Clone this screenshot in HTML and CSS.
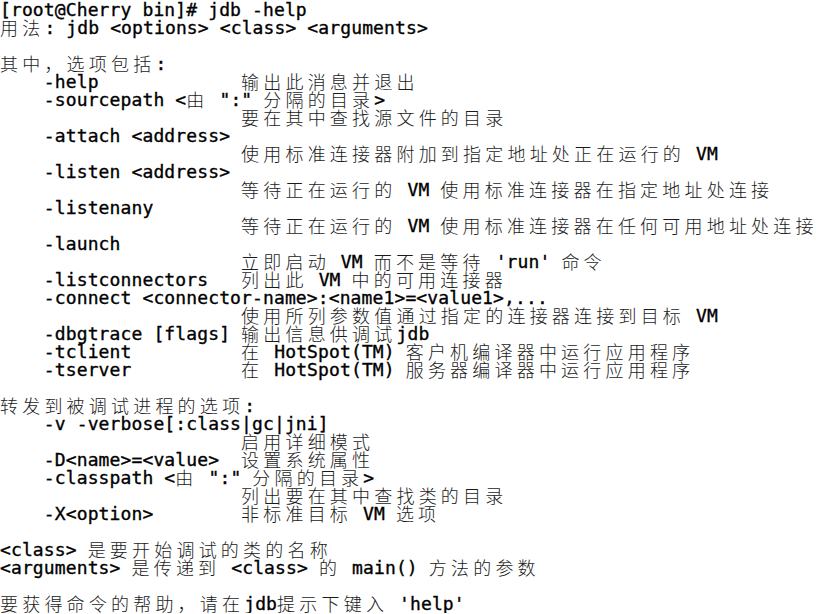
FILE: index.html
```html
<!DOCTYPE html>
<html lang="zh-CN">
<head>
<meta charset="utf-8">
<title>jdb -help</title>
<link rel="stylesheet" href="styles.css">
</head>
<body>
<div class="term">
<div class="l">[root@Cherry bin]# jdb -help</div>
<div class="l"><span class="c">用法</span>: jdb &lt;options&gt; &lt;class&gt; &lt;arguments&gt;</div>
<div class="l"></div>
<div class="l"><span class="c">其中，选项包括</span>:</div>
<div class="l">    -help             <span class="c">输出此消息并退出</span></div>
<div class="l">    -sourcepath &lt;<span class="c">由</span> ":" <span class="c">分隔的目录</span>&gt;</div>
<div class="l">                      <span class="c">要在其中查找源文件的目录</span></div>
<div class="l">    -attach &lt;address&gt;</div>
<div class="l">                      <span class="c">使用标准连接器附加到指定地址处正在运行的</span> VM</div>
<div class="l">    -listen &lt;address&gt;</div>
<div class="l">                      <span class="c">等待正在运行的</span> VM <span class="c">使用标准连接器在指定地址处连接</span></div>
<div class="l">    -listenany</div>
<div class="l">                      <span class="c">等待正在运行的</span> VM <span class="c">使用标准连接器在任何可用地址处连接</span></div>
<div class="l">    -launch</div>
<div class="l">                      <span class="c">立即启动</span> VM <span class="c">而不是等待</span> 'run' <span class="c">命令</span></div>
<div class="l">    -listconnectors   <span class="c">列出此</span> VM <span class="c">中的可用连接器</span></div>
<div class="l">    -connect &lt;connector-name&gt;:&lt;name1&gt;=&lt;value1&gt;,...</div>
<div class="l">                      <span class="c">使用所列参数值通过指定的连接器连接到目标</span> VM</div>
<div class="l">    -dbgtrace [flags] <span class="c">输出信息供调试</span>jdb</div>
<div class="l">    -tclient          <span class="c">在</span> HotSpot(TM) <span class="c">客户机编译器中运行应用程序</span></div>
<div class="l">    -tserver          <span class="c">在</span> HotSpot(TM) <span class="c">服务器编译器中运行应用程序</span></div>
<div class="l"></div>
<div class="l"><span class="c">转发到被调试进程的选项</span>:</div>
<div class="l">    -v -verbose[:class|gc|jni]</div>
<div class="l">                      <span class="c">启用详细模式</span></div>
<div class="l">    -D&lt;name&gt;=&lt;value&gt;  <span class="c">设置系统属性</span></div>
<div class="l">    -classpath &lt;<span class="c">由</span> ":" <span class="c">分隔的目录</span>&gt;</div>
<div class="l">                      <span class="c">列出要在其中查找类的目录</span></div>
<div class="l">    -X&lt;option&gt;        <span class="c">非标准目标</span> VM <span class="c">选项</span></div>
<div class="l"></div>
<div class="l">&lt;class&gt; <span class="c">是要开始调试的类的名称</span></div>
<div class="l">&lt;arguments&gt; <span class="c">是传递到</span> &lt;class&gt; <span class="c">的</span> main() <span class="c">方法的参数</span></div>
<div class="l"></div>
<div class="l"><span class="c">要获得命令的帮助，请在</span>jdb<span class="c">提示下键入</span> 'help'</div>
</div>
</body>
</html>
```

FILE: styles.css
```css
html, body {
  margin: 0;
  padding: 0;
  background: #ffffff;
}

.term {
  padding: 1px 0 0 0;
  font-family: "DejaVu Sans Mono", "Liberation Mono", monospace;
  font-size: 18px;
  letter-spacing: 0.12px;
  font-weight: normal;
  -webkit-text-stroke: 0.35px #000000;
  color: #000000;
}

.l {
  height: 18px;
  line-height: 18px;
  white-space: pre;
}

.c {
  font-family: "Noto Sans CJK SC", "Noto Sans CJK TC", sans-serif;
  font-size: 18px;
  font-weight: 300;
  letter-spacing: 4.2px;
  color: #1a1a1a;
  -webkit-text-stroke: 0;
  line-height: 0;
  vertical-align: -1px;
}
```
